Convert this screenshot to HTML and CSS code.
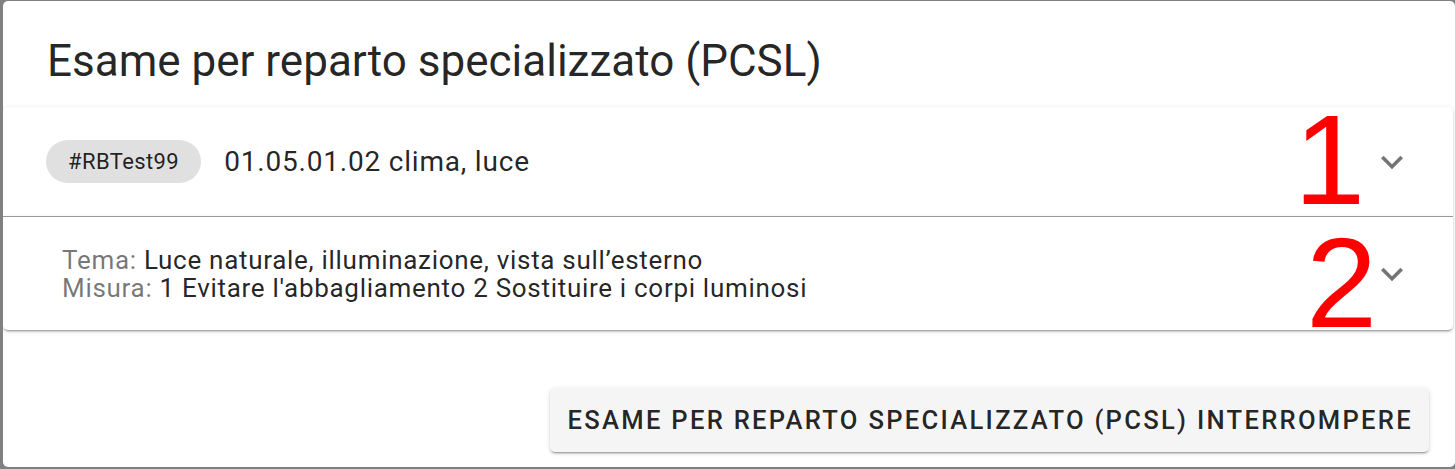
FILE: index.html
```html
<!DOCTYPE html>
<html lang="it">
<head>
<meta charset="utf-8">
<title>Esame per reparto specializzato (PCSL)</title>
<link rel="stylesheet" href="styles.css">
</head>
<body>
<div class="dialog">
  <div class="title">Esame per reparto specializzato (PCSL)</div>
  <div class="panels">
    <div class="panel panel-first">
      <div class="header">
        <span class="chip">#RBTest99</span>
        <span class="header-text">01.05.01.02 clima, luce</span>
        <svg class="chevron" viewBox="0 0 24 24"><path d="M7.41,8.58L12,13.17L16.59,8.58L18,10L12,16L6,10L7.41,8.58Z"/></svg>
      </div>
    </div>
    <div class="panel panel-second">
      <div class="header">
        <div class="lines">
          <div><span class="label">Tema:</span> Luce naturale, illuminazione, vista sull’esterno</div>
          <div><span class="label">Misura:</span> 1 Evitare l'abbagliamento 2 Sostituire i corpi luminosi</div>
        </div>
        <svg class="chevron" viewBox="0 0 24 24"><path d="M7.41,8.58L12,13.17L16.59,8.58L18,10L12,16L6,10L7.41,8.58Z"/></svg>
      </div>
    </div>
  </div>
  <div class="actions">
    <button class="btn">Esame per reparto specializzato (PCSL) interrompere</button>
  </div>
  <span class="mark mark-1">1</span>
  <span class="mark mark-2">2</span>
</div>
</body>
</html>
```
FILE: styles.css
```css
html, body {
  margin: 0;
  padding: 0;
  background: #808080;
  overflow: hidden;
}
body {
  font-family: Roboto, "Noto Sans", sans-serif;
  height: 469px;
}
.dialog {
  position: relative;
  margin: 1px 0 0 3px;
  width: 1452px;
  height: 466px;
  background: #fff;
  border-radius: 5px;
  overflow: hidden;
  display: flex;
  flex-direction: column;
}
.title {
  font-size: 44px;
  line-height: 52px;
  color: rgba(0,0,0,0.87);
  padding: 34px 44px 20px;
}
.panels {
  width: 1450px;
  display: flex;
  flex-direction: column;
}
.panel {
  background: #fff;
  box-shadow: 0 3px 1px -2px rgba(0,0,0,.2), 0 2px 2px 0 rgba(0,0,0,.14), 0 1px 5px 0 rgba(0,0,0,.12);
}
.panel-first {
  height: 109px;
  border-radius: 5px 5px 0 0;
  border-bottom: 1px solid #9e9e9e;
}
.panel-second {
  height: 113px;
  border-radius: 0 0 5px 5px;
}
.header {
  height: 100%;
  display: flex;
  align-items: center;
  padding: 0 39px 0 43px;
}
.chip {
  display: inline-flex;
  align-items: center;
  height: 43px;
  padding: 0 22px;
  border-radius: 22px;
  background: #e0e0e0;
  color: rgba(0,0,0,0.87);
  font-size: 22px;
  letter-spacing: 0.4px;
}
.header-text {
  margin-left: 23px;
  font-size: 28px;
  letter-spacing: 0.8px;
  color: rgba(0,0,0,0.87);
  flex: 1;
}
.lines {
  flex: 1;
  padding-left: 16px;
  font-size: 26px;
  letter-spacing: 0.7px;
  line-height: 28px;
  color: rgba(0,0,0,0.87);
}
.label {
  color: rgba(0,0,0,0.54);
}
.chevron {
  width: 44px;
  height: 44px;
  fill: rgba(0,0,0,0.54);
  flex: none;
}
.actions {
  flex: 1;
  display: flex;
  justify-content: flex-end;
  align-items: flex-end;
  padding: 0 26px 15px;
}
.btn {
  font-family: Roboto, sans-serif;
  font-weight: 500;
  font-size: 25.6px;
  letter-spacing: 0.089em;
  text-transform: uppercase;
  color: rgba(0,0,0,0.87);
  background: #f5f5f5;
  border: none;
  border-radius: 5px;
  height: 64px;
  padding: 0 16px 0 18px;
  box-shadow: 0 3px 1px -2px rgba(0,0,0,.2), 0 2px 2px 0 rgba(0,0,0,.14), 0 1px 5px 0 rgba(0,0,0,.12);
}
.mark {
  position: absolute;
  font-family: "Liberation Sans", Arial, sans-serif;
  font-size: 128px;
  line-height: 96px;
  height: 96px;
  color: #ff0000;
}
.mark-1 {
  left: 1291px;
  top: 111px;
}
.mark-2 {
  left: 1303px;
  top: 234px;
}
```
